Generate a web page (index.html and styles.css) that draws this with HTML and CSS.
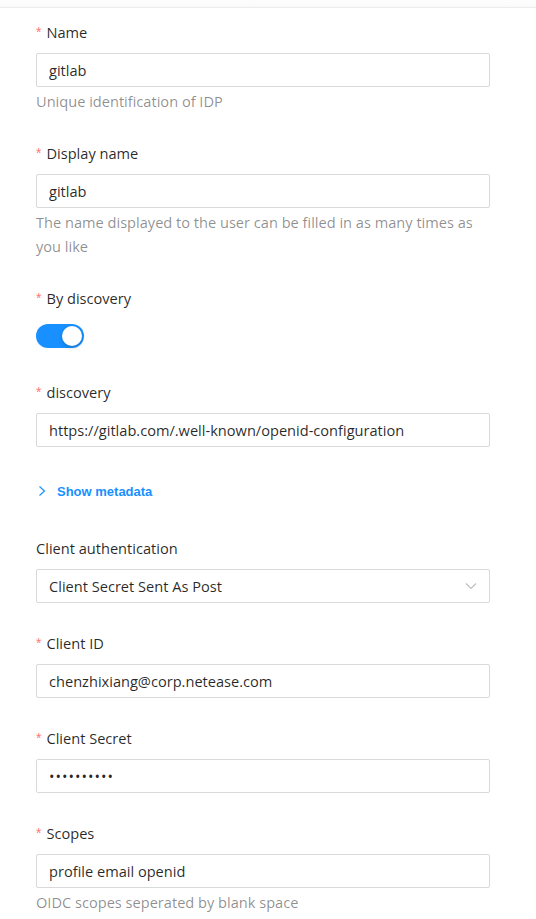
FILE: index.html
```html
<!DOCTYPE html>
<html>
<head>
<meta charset="utf-8">
<link rel="stylesheet" href="styles.css">
</head>
<body>
<div class="topbar"></div>
<form class="form">
  <div class="item">
    <label class="label"><span class="req">*</span>Name</label>
    <input class="input" type="text" value="gitlab" readonly>
    <div class="help">Unique identification of IDP</div>
  </div>
  <div class="item">
    <label class="label"><span class="req">*</span>Display name</label>
    <input class="input" type="text" value="gitlab" readonly>
    <div class="help">The name displayed to the user can be filled in as many times as you like</div>
  </div>
  <div class="item item-switch">
    <label class="label"><span class="req">*</span>By discovery</label>
    <div class="switch"><span class="knob"></span></div>
  </div>
  <div class="item">
    <label class="label"><span class="req">*</span>discovery</label>
    <input class="input" type="text" value="https://gitlab.com/.well-known/openid-configuration" readonly>
  </div>
  <div class="collapse">
    <svg class="chev" width="10" height="12" viewBox="0 0 10 12"><path d="M2.5 1.5 L7.5 6 L2.5 10.5" fill="none" stroke="#1890ff" stroke-width="1.2"/></svg>
    <span class="collapse-text">Show metadata</span>
  </div>
  <div class="item">
    <label class="label">Client authentication</label>
    <div class="select">
      <span>Client Secret Sent As Post</span>
      <svg class="arrow" width="12" height="8" viewBox="0 0 12 8"><path d="M1 1.5 L6 6.5 L11 1.5" fill="none" stroke="#bfbfbf" stroke-width="1.2"/></svg>
    </div>
  </div>
  <div class="item">
    <label class="label"><span class="req">*</span>Client ID</label>
    <input class="input" type="text" value="chenzhixiang@corp.netease.com" readonly>
  </div>
  <div class="item">
    <label class="label"><span class="req">*</span>Client Secret</label>
    <input class="input input-secret" type="text" value="••••••••••" readonly>
  </div>
  <div class="item">
    <label class="label"><span class="req">*</span>Scopes</label>
    <input class="input" type="text" value="profile email openid" readonly>
    <div class="help">OIDC scopes seperated by blank space</div>
  </div>
</form>
</body>
</html>
```
FILE: styles.css
```css
html, body {
  margin: 0;
  padding: 0;
  background: #fff;
}
body {
  font-family: "Open Sans", "Noto Sans", sans-serif;
  font-size: 14.6px;
  color: rgba(0, 0, 0, 0.85);
}
.topbar {
  height: 7px;
  border-bottom: 1px solid #ececec;
  background: linear-gradient(#fdfdfd, #fafafa);
}
.form {
  padding: 14px 46px 0 36px;
  display: flex;
  flex-direction: column;
}
.item {
  display: flex;
  flex-direction: column;
  margin-bottom: 30px;
}
.label {
  display: block;
  line-height: 22px;
  padding-bottom: 9px;
  margin-top: -1px;
  margin-bottom: 1px;
  color: rgba(0, 0, 0, 0.85);
}
.req {
  color: #ff7875;
  font-family: "Liberation Sans", sans-serif;
  font-size: 14px;
  margin-right: 5px;
  display: inline-block;
  vertical-align: top;
  line-height: 22px;
}
.input {
  box-sizing: border-box;
  width: 100%;
  height: 34px;
  margin: 0;
  padding: 0 12px;
  border: 1px solid #d9d9d9;
  border-radius: 2px;
  font-family: "Open Sans", "Noto Sans", sans-serif;
  font-size: 14.6px;
  color: rgba(0, 0, 0, 0.85);
  background: #fff;
  outline: none;
}
.input-secret {
  letter-spacing: 1px;
}
.help {
  padding-top: 2px;
  line-height: 24px;
  color: rgba(0, 0, 0, 0.45);
}
.item-switch {
  margin-bottom: 34px;
}
.switch {
  margin-top: 5px;
  width: 48px;
  height: 24px;
  border-radius: 12px;
  background: #1890ff;
  position: relative;
}
.knob {
  position: absolute;
  top: 2px;
  right: 2px;
  width: 20px;
  height: 20px;
  border-radius: 50%;
  background: #fff;
  box-shadow: 0 2px 4px rgba(0, 35, 11, 0.2);
}
.collapse {
  height: 28px;
  display: flex;
  align-items: center;
  margin-bottom: 33px;
  padding-left: 1px;
}
.chev {
  display: block;
  margin-right: 10px;
}
.collapse-text {
  font-family: "Liberation Sans", Arial, sans-serif;
  font-weight: bold;
  font-size: 13px;
  color: #1890ff;
}
.select {
  box-sizing: border-box;
  height: 34px;
  border: 1px solid #d9d9d9;
  border-radius: 2px;
  padding: 0 12px;
  display: flex;
  align-items: center;
  justify-content: space-between;
}
.arrow {
  display: block;
}
```
